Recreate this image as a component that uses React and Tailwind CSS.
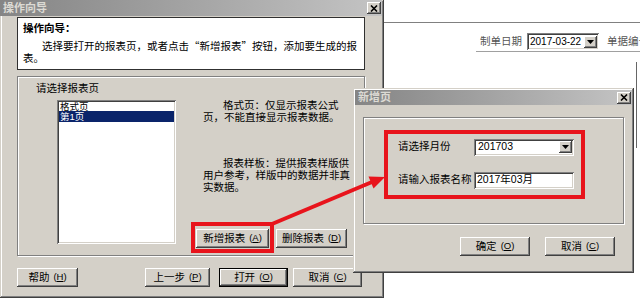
import React from 'react';

const win = 'shadow-[inset_-1px_-1px_0_#404040,inset_1px_1px_0_#d4d0c8,inset_-2px_-2px_0_#808080,inset_2px_2px_0_#ffffff]';
const btn = 'shadow-[inset_-1px_-1px_0_#404040,inset_1px_1px_0_#ffffff,inset_-2px_-2px_0_#808080]';
const defBtn = 'shadow-[inset_0_0_0_1px_#000000,inset_-2px_-2px_0_#404040,inset_2px_2px_0_#ffffff,inset_-3px_-3px_0_#808080]';
const sunken = 'shadow-[inset_1px_1px_0_#808080,inset_-1px_-1px_0_#ffffff,inset_2px_2px_0_#404040,inset_-2px_-2px_0_#d4d0c8]';
const etched = 'border border-[#808080] shadow-[inset_1px_1px_0_#ffffff,1px_1px_0_#ffffff]';

function CloseBtn() {
  return (
    <div className={`w-[14px] h-[12px] bg-[#d4d0c8] flex items-center justify-center ${btn}`}>
      <svg width="8" height="7" viewBox="0 0 8 7">
        <path d="M1 0.5 L7 6.5 M7 0.5 L1 6.5" stroke="#000" strokeWidth="1.6" />
      </svg>
    </div>
  );
}

function Btn({ label, k, w, def }) {
  return (
    <div className={`h-[19px] ${w} bg-[#d4d0c8] flex items-center justify-center text-[10.5px] text-black whitespace-nowrap ${def ? defBtn : btn}`}>
      <span>{label}</span>
      <span className="ml-[4px] text-[9.5px]">(<span className="underline">{k}</span>)</span>
    </div>
  );
}

function DropArrow() {
  return (
    <div className={`w-[13px] h-[12px] shrink-0 bg-[#d4d0c8] flex items-center justify-center ${btn}`}>
      <svg width="7" height="4" viewBox="0 0 7 4"><path d="M0 0 H7 L3.5 4 Z" fill="#000" /></svg>
    </div>
  );
}

const cjk = "font-['Noto_Sans_CJK_SC',sans-serif]";

export default function App() {
  return (
    <div className="relative w-[640px] h-[304px] bg-white overflow-hidden text-black font-['Liberation_Sans','Noto_Sans_CJK_SC',sans-serif]">
      {/* background app */}
      <div className="absolute left-[384px] top-0 right-0 h-full">
        <div className="h-[23px] border-b border-[#808080]" />
        <div className="ml-[92px] mt-[9px] h-[20px] border-b border-[#a0a0a0] flex items-center text-[10.5px] text-[#555] whitespace-nowrap">
          <span className="ml-[4px] shrink-0">制单日期</span>
          <div className={`ml-[5px] w-[72px] h-[17px] shrink-0 bg-white flex items-center justify-between pl-[3px] pr-[2px] text-black text-[10px] ${sunken}`}>
            <span>2017-03-22</span>
            <DropArrow />
          </div>
          <span className="ml-[8px] shrink-0">单据编号</span>
        </div>
      </div>
      <div className="absolute left-[636px] top-[62px] w-px h-[86px] bg-[#666]" />

      {/* wizard dialog */}
      <div className={`absolute left-0 top-0 w-[384px] h-[298px] bg-[#d4d0c8] flex flex-col pr-[2px] pb-[2px] ${win}`}>
        <div className="h-[16px] bg-gradient-to-r from-[#858585] to-[#c4c4c4] flex items-center justify-between pl-[3px] pr-[1px]">
          <span className="text-[11px] font-bold text-[#dcdad4] leading-none">操作向导</span>
          <CloseBtn />
        </div>
        <div className="flex flex-col px-[17px]">
          <div className="mt-[1px] h-[53px] bg-white border border-[#303030] pl-[5px] pt-[4px] text-[10.5px] leading-[12px]">
            <div className="font-bold">操作向导：</div>
            <div className="mt-[6px] whitespace-nowrap indent-[19px]">
              选择要打开的报表页，或者点击<span className={cjk}>“</span>新增报表<span className={cjk}>”</span>按钮，添加要生成的报<br />表。
            </div>
          </div>
          <div className={`mt-[6px] h-[180px] ${etched} flex flex-col`}>
            <div className="pl-[18px] pt-[5px] text-[10.5px] leading-[12px]">请选择报表页</div>
            <div className="mt-[6px] pl-[39px] flex">
              <div className={`w-[119px] h-[144px] bg-white pt-[1px] px-[2px] flex flex-col text-[9.5px] leading-[11px] ${sunken}`}>
                <div className="h-[10px] pl-[1px]">格式页</div>
                <div className="h-[11px] pl-[1px] bg-[#0a246a] text-white">第1页</div>
              </div>
              <div className="ml-[20px] flex flex-col">
                <div className="-mt-px pl-[7px] text-[10.5px] leading-[12px] whitespace-nowrap indent-[20px]">
                  格式页：仅显示报表公式<br />页，不能直接显示报表数据。
                </div>
                <div className="mt-[34px] pl-[7px] text-[10.5px] leading-[12px] whitespace-nowrap indent-[20px]">
                  报表样板：提供报表样版供<br />用户参考，样版中的数据并非真<br />实数据。
                </div>
                <div className="mt-[36px] flex gap-[7px]">
                  <Btn label="新增报表" k="A" w="w-[73px]" />
                  <Btn label="删除报表" k="D" w="w-[71px]" />
                </div>
              </div>
            </div>
          </div>
          <div className="mt-[12px] flex">
            <Btn label="帮助" k="H" w="w-[61px]" />
            <div className="ml-[67px]"><Btn label="上一步" k="P" w="w-[65px]" /></div>
            <div className="ml-[9px]"><Btn label="打开" k="O" w="w-[69px]" def /></div>
            <div className="ml-[5px]"><Btn label="取消" k="C" w="w-[69px]" /></div>
          </div>
        </div>
      </div>

      {/* new page dialog */}
      <div className={`absolute left-[353px] top-[88px] w-[281px] h-[185px] bg-[#d4d0c8] p-[2px] flex flex-col ${win}`}>
        <div className="h-[15px] bg-gradient-to-r from-[#858585] to-[#c4c4c4] flex items-center justify-between pl-[3px] pr-[1px]">
          <span className="text-[11px] font-bold text-[#dcdad4] leading-none">新增页</span>
          <CloseBtn />
        </div>
        <div className={`mx-[8px] mt-[12px] h-[107px] ${etched} flex flex-col pt-[21px] pl-[34px] text-[10.5px]`}>
          <div className="flex items-center h-[16px]">
            <span className="w-[76px]">请选择月份</span>
            <div className={`w-[100px] h-[17px] bg-white flex items-center justify-between pl-[4px] pr-[2px] ${sunken}`}>
              <span>201703</span>
              <DropArrow />
            </div>
          </div>
          <div className="mt-[17px] flex items-center h-[16px]">
            <span className="w-[76px] whitespace-nowrap">请输入报表名称</span>
            <div className={`w-[100px] h-[17px] bg-white flex items-center pl-[3px] ${sunken}`}>
              <span>2017年03月</span>
            </div>
          </div>
        </div>
        <div className="mt-[13px] flex justify-end gap-[15px] pr-[17px]">
          <Btn label="确定" k="O" w="w-[70px]" />
          <Btn label="取消" k="C" w="w-[70px]" />
        </div>
      </div>

      {/* annotations */}
      <svg className="absolute left-0 top-0 pointer-events-none" width="640" height="304" viewBox="0 0 640 304">
        <rect x="193" y="224" width="79" height="27" fill="none" stroke="#e8141c" strokeWidth="4" />
        <rect x="386" y="132" width="197" height="65" fill="none" stroke="#e8141c" strokeWidth="4" />
        <line x1="272" y1="224" x2="372" y2="182" stroke="#e8141c" strokeWidth="4" />
        <polygon points="385,177 373.5,188.5 368.5,176.5" fill="#e8141c" />
      </svg>
    </div>
  );
}
